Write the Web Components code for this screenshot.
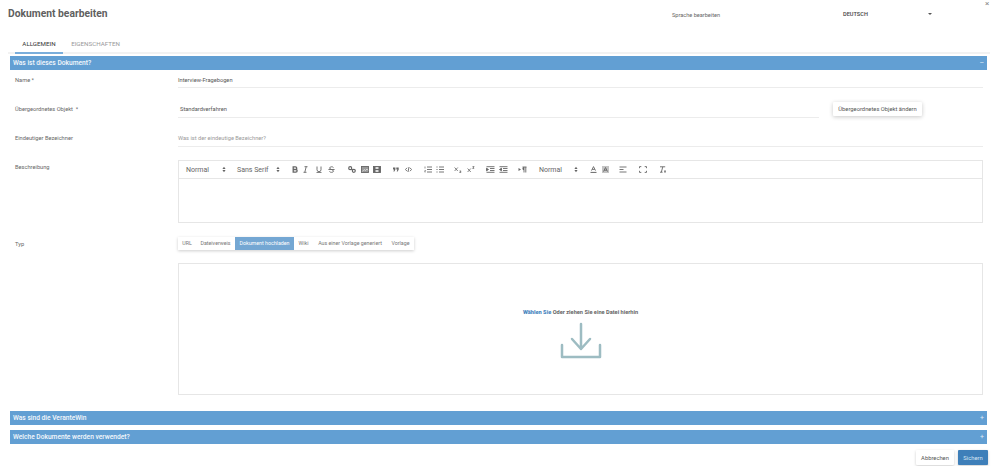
<!DOCTYPE html>
<html lang="de">
<head>
<meta charset="utf-8">
<title>Dokument bearbeiten</title>
<style>
html, body { margin: 0; padding: 0; background: #fff; }
body { width: 1000px; height: 466px; overflow: hidden; font-family: Roboto, "Liberation Sans", sans-serif; color: #555; }
</style>
</head>
<body>
<doc-editor>
  <doc-header title-text="Dokument bearbeiten" lang-label="Sprache bearbeiten" lang-value="DEUTSCH"></doc-header>
  <doc-tabs></doc-tabs>
  <section-bar open>Was ist dieses Dokument?</section-bar>
  <form-row label="Name *" height="30" pad="6"><text-line pad="6">Interview-Fragebogen</text-line></form-row>
  <form-row label="Übergeordnetes Objekt &nbsp;*" height="29" pad="5">
    <text-line short pad="5">Standardverfahren</text-line>
    <raised-button slot="aside">Übergeordnetes Objekt ändern</raised-button>
  </form-row>
  <form-row label="Eindeutiger Bezeichner" height="31" pad="5"><text-line muted pad="5">Was ist der eindeutige Bezeichner?</text-line></form-row>
  <form-row label="Beschreibung" height="77" pad="3"><rich-editor></rich-editor></form-row>
  <form-row label="Typ" height="26" pad="3"><type-tabs></type-tabs></form-row>
  <drop-zone></drop-zone>
  <section-bar class="second">Was sind die VeranteWin</section-bar>
  <section-bar class="third">Welche Dokumente werden verwendet?</section-bar>
  <form-actions></form-actions>
</doc-editor>

<script>
class DocEditor extends HTMLElement {
    connectedCallback() {
        this.attachShadow({ mode: 'open' });
        this.shadowRoot.innerHTML = `
            <style>
                :host { display: block; position: relative; height: 466px; }
                .close { position: absolute; top: 0; left: 985px; font-size: 8px; line-height: 8px; color: #888; }
                ::slotted(section-bar.second) { margin-top: 16px; }
                ::slotted(section-bar.third) { margin-top: 5px; }
            </style>
            <span class="close">×</span>
            <slot></slot>
        `;
    }
}

class DocHeader extends HTMLElement {
    connectedCallback() {
        this.attachShadow({ mode: 'open' });
        this.shadowRoot.innerHTML = `
            <style>
                :host { display: flex; height: 35px; box-sizing: border-box; padding: 6px 0 0 8px; align-items: flex-start; }
                h1 { margin: 0; width: 664px; font-size: 10.3px; line-height: 15px; font-weight: 700; color: #5f5f5f; }
                .lang { width: 171px; padding-top: 4px; font-size: 5.6px; line-height: 10px; color: #666; }
                .value { width: 85px; padding-top: 3px; font-size: 5.6px; line-height: 10px; color: #444; font-weight: 500; }
                .caret { margin-top: 7px; width: 0; height: 0; border: 2px solid transparent; border-top: 2px solid #555; border-bottom: 0; }
            </style>
            <h1>${this.getAttribute('title-text')}</h1>
            <span class="lang">${this.getAttribute('lang-label')}</span>
            <span class="value">${this.getAttribute('lang-value')}</span>
            <span class="caret"></span>
        `;
    }
}

class DocTabs extends HTMLElement {
    connectedCallback() {
        this.attachShadow({ mode: 'open' });
        this.shadowRoot.innerHTML = `
            <style>
                :host { display: flex; height: 19px; box-sizing: border-box; margin: 0 10px 0 8px; padding-left: 7px; border-bottom: 2px solid #f2f2f2; }
                span { font-size: 6.2px; line-height: 18px; height: 19px; box-sizing: border-box; text-align: center; color: #999; }
                .on { width: 48px; color: #333; border-bottom: 2px solid #7aaedb; }
                .off { margin-left: 8px; width: 49px; }
            </style>
            <span class="on">ALLGEMEIN</span>
            <span class="off">EIGENSCHAFTEN</span>
        `;
    }
}

class SectionBar extends HTMLElement {
    connectedCallback() {
        this.attachShadow({ mode: 'open' });
        const sign = this.hasAttribute('open') ? '–' : '+';
        this.shadowRoot.innerHTML = `
            <style>
                :host { display: flex; justify-content: space-between; align-items: center; box-sizing: border-box; height: 14px; margin: 2px 13px 0 10px; padding: 0 3px; background: #629fd3; color: #f4f8fc; font-size: 6.65px; font-weight: 500; }
                .sign { font-size: 7px; font-weight: 400; opacity: .85; }
            </style>
            <span><slot></slot></span>
            <span class="sign">${sign}</span>
        `;
    }
}

class FormRow extends HTMLElement {
    connectedCallback() {
        this.attachShadow({ mode: 'open' });
        this.shadowRoot.innerHTML = `
            <style>
                :host { display: grid; grid-template-columns: 163px 641px 103px; box-sizing: border-box; height: ${this.getAttribute('height')}px; margin-left: 15px; align-items: start; }
                .label { font-size: 5.7px; line-height: 8px; color: #666; padding-top: ${this.getAttribute('pad')}px; }
                .body { grid-column: 2 / 4; grid-row: 1; min-width: 0; width: 805px; }
                .aside { grid-column: 3; grid-row: 1; position: relative; z-index: 1; }
                .aside-box { margin-left: 14px; }
            </style>
            <span class="label">${this.getAttribute('label')}</span>
            <div class="body"><slot></slot></div>
            <div class="aside"><div class="aside-box"><slot name="aside"></slot></div></div>
        `;
    }
}

class TextLine extends HTMLElement {
    connectedCallback() {
        this.attachShadow({ mode: 'open' });
        const short = this.hasAttribute('short');
        this.shadowRoot.innerHTML = `
            <style>
                :host { display: block; box-sizing: border-box; height: 18px; width: ${short ? '641px' : '805px'}; padding: ${this.getAttribute('pad')}px 0 0 ${short ? 2 : 0}px; border-bottom: 1px solid #ececec; font-size: 5.7px; line-height: 8px; color: ${this.hasAttribute('muted') ? '#9a9a9a' : '#555'}; }
            </style>
            <slot></slot>
        `;
    }
}

class RaisedButton extends HTMLElement {
    connectedCallback() {
        this.attachShadow({ mode: 'open' });
        this.shadowRoot.innerHTML = `
            <style>
                :host { display: block; box-sizing: border-box; width: 89px; height: 14px; margin-top: 2px; text-align: center; font-size: 5.8px; line-height: 14px; color: #555; background: #fff; box-shadow: 0 1px 4px rgba(0,0,0,.22); border-radius: 1px; white-space: nowrap; }
            </style>
            <slot></slot>
        `;
    }
}

class RichEditor extends HTMLElement {
    connectedCallback() {
        this.attachShadow({ mode: 'open' });
        const ic = (w, body) => `<svg width="${w}" height="7" viewBox="0 0 ${w} 7" fill="none" stroke="#666" stroke-width=".9">${body}</svg>`;
        const gap = (w) => `<i style="width:${w}px"></i>`;
        const updown = `<svg width="4" height="7" viewBox="0 0 4 7" fill="#666"><path d="M2 .8 3.6 3H.4zM2 6.2.4 4h3.2z"/></svg>`;
        const lines = (x) => `<path d="M${x} 1h5M${x} 3.5h5M${x} 6h5"/>`;
        this.shadowRoot.innerHTML = `
            <style>
                :host { display: block; box-sizing: border-box; width: 805px; height: 63px; border: 1px solid #e6e6e6; }
                .bar { display: flex; align-items: center; box-sizing: border-box; height: 18px; padding-left: 7px; border-bottom: 1px solid #e6e6e6; color: #666; font-size: 7px; white-space: nowrap; }
                .bar i { display: block; flex: none; }
                .bar svg { flex: none; display: block; }
                .t { flex: none; }
            </style>
            <div class="bar">
                <span class="t" style="width:23px">Normal</span>${gap(13)}${updown}${gap(11)}
                <span class="t" style="width:33px">Sans Serif</span>${gap(6)}${updown}${gap(12)}
                ${ic(6, '<path stroke-width="1.3" d="M1.2 .8h2.2a1.3 1.3 0 0 1 0 2.7H1.2zM1.2 3.5h2.6a1.35 1.35 0 0 1 0 2.7H1.2z"/>')}${gap(5)}
                ${ic(5, '<path d="M1.5.7h3M.5 6.3h3M3.2.7 1.8 6.3"/>')}${gap(8)}
                ${ic(6, '<path d="M1 .5v3.2a2 2 0 0 0 4 0V.5M.5 6.6h5"/>')}${gap(6)}
                ${ic(7, '<path d="M5.5 1.6C5 .6 2 .2 1.6 2c-.3 1.5 4 1.4 3.9 3.2C5.4 6.8 2 6.6 1.4 5.4M.4 3.5h6.2"/>')}${gap(13)}
                ${ic(8, '<circle cx="2.2" cy="2.2" r="1.5" stroke-width="1.2"/><circle cx="5.8" cy="4.8" r="1.5" stroke-width="1.2"/><path stroke-width="1.2" d="M3 3l2 1"/>')}${gap(5)}
                ${ic(8, '<rect x=".5" y=".5" width="7" height="6" fill="#999"/><path stroke="#eee" stroke-width=".7" d="M1.2 5.6l2-2 1.3 1L6 3l1 1.4"/>')}${gap(4)}
                ${ic(8, '<rect x=".5" y=".5" width="7" height="6" fill="#666"/><rect x="2.5" y="1" width="3" height="2" fill="#ddd" stroke="none"/><rect x="2.5" y="4" width="3" height="2" fill="#ddd" stroke="none"/>')}${gap(12)}
                ${ic(6, '<path fill="#666" stroke="none" d="M0 1.5h2.4v2L1.4 5.5H.4l.7-2H0zM3.3 1.5h2.4v2l-1 2h-1l.7-2H3.3z"/>')}${gap(6)}
                ${ic(7, '<path d="M2 1.8.5 3.5 2 5.2M5 1.8l1.5 1.7L5 5.2M4 1 3 6"/>')}${gap(12)}
                ${ic(8, '<path stroke-width=".7" d="M1 .5v2M.6 4.5h1l-1 1.5h1"/><path d="M3 1h5M3 3.5h5M3 6h5"/>')}${gap(4)}
                ${ic(8, '<path stroke-dasharray="1 1.5" stroke-width="1" d="M1 .5v6"/>' + lines(3))}${gap(10)}
                ${ic(8, '<path d="M.6 1.5l3.2 3.5M3.8 1.5.6 5M5.5 5h1.6l-1.4 1.6h1.5" stroke-width=".8"/>')}${gap(5)}
                ${ic(8, '<path d="M.6 2.5l3.2 3.5M3.8 2.5.6 6M5.5 .6h1.6L5.7 2.4h1.5" stroke-width=".8"/>')}${gap(11)}
                ${ic(9, '<path d="M.5 .7h8M.5 6.3h8M4 2.5h4.5M4 4.5h4.5"/><path d="M.5 2.2 2.5 3.5.5 4.8z" fill="#666"/>')}${gap(4)}
                ${ic(9, '<path d="M.5 .7h8M.5 6.3h8M4 2.5h4.5M4 4.5h4.5"/><path d="M2.5 2.2.5 3.5l2 1.3z" fill="#666"/>')}${gap(10)}
                ${ic(9, '<path d="M4.5 1h4M6 1v5.5M7.8 1v5.5" /><path fill="#666" stroke="none" d="M6 1a1.6 1.6 0 0 0 0 3.2zM.5 2 3 3.5.5 5z"/>')}${gap(12)}
                <span class="t" style="width:24px">Normal</span>${gap(11)}${updown}${gap(12)}
                ${ic(7, '<path d="M1.5 4.6 3.5.6l2 4M2.2 3.4h2.6"/><path stroke-width="1" d="M.5 6.4h6"/>')}${gap(5)}
                ${ic(7, '<rect width="7" height="7" fill="#c4c4c4" stroke="none"/><path d="M1.5 5.6 3.5 1.5l2 4.1M2.2 4.2h2.6"/>')}${gap(10)}
                ${ic(8, '<path d="M.5 1h7M.5 3.5h4M.5 6h7"/>')}${gap(12)}
                ${ic(8, '<path d="M.5 2.2V.6h1.8M5.7.6h1.8v1.6M.5 4.8v1.6h1.8M5.7 6.4h1.8V4.8"/>')}${gap(12)}
                ${ic(8, '<path d="M1 .8h5.2M3.8.8 2.3 6.2M1 6.2h2.6M5 4.6l2 1.8M7 4.6 5 6.4"/>')}
            </div>
        `;
    }
}

class TypeTabs extends HTMLElement {
    connectedCallback() {
        this.attachShadow({ mode: 'open' });
        const tabs = [['URL', 18], ['Dateiverweis', 39], ['Dokument hochladen', 59], ['Wiki', 19], ['Aus einer Vorlage generiert', 74], ['Vorlage', 27]];
        this.shadowRoot.innerHTML = `
            <style>
                :host { display: flex; width: fit-content; height: 13px; background: #fff; box-shadow: 0 1px 3px rgba(0,0,0,.2); }
                span { display: block; font-size: 5.3px; line-height: 13px; text-align: center; color: #777; white-space: nowrap; }
                .on { background: #74a7d3; color: #fff; }
            </style>
            ${tabs.map(([t, w]) => `<span class="${t === 'Dokument hochladen' ? 'on' : ''}" style="width:${w}px">${t}</span>`).join('')}
        `;
    }
}

class DropZone extends HTMLElement {
    connectedCallback() {
        this.attachShadow({ mode: 'open' });
        this.shadowRoot.innerHTML = `
            <style>
                :host { display: flex; flex-direction: column; align-items: center; box-sizing: border-box; width: 805px; height: 132px; margin-left: 178px; padding-top: 44px; border: 1px solid #e6e6e6; }
                p { margin: 0; font-size: 5.65px; line-height: 8px; font-weight: 700; color: #666; }
                b { color: #4a86c0; }
                svg { display: block; margin-top: 6px; }
            </style>
            <p><b>Wählen Sie</b> Oder ziehen Sie eine Datei hierhin</p>
            <svg width="42" height="37" viewBox="0 0 42 37" fill="none" stroke="#9dbcc2" stroke-width="2.5" stroke-linecap="round" stroke-linejoin="round">
                <path d="M21 2v25M12 17l9 10 9-10M2 23v12h38V23"/>
            </svg>
        `;
    }
}

class FormActions extends HTMLElement {
    connectedCallback() {
        this.attachShadow({ mode: 'open' });
        this.shadowRoot.innerHTML = `
            <style>
                :host { display: flex; justify-content: flex-end; gap: 4px; margin: 6px 12px 0 0; height: 15px; }
                button { font: inherit; font-size: 5.8px; border: 0; padding: 0; height: 15px; border-radius: 1px; }
                .cancel { width: 38px; background: #fff; color: #555; box-shadow: 0 1px 3px rgba(0,0,0,.2); }
                .save { width: 30px; background: #3e7fb9; color: #d8e8f4; box-shadow: 0 1px 3px rgba(0,0,0,.2); }
            </style>
            <button class="cancel">Abbrechen</button>
            <button class="save">Sichern</button>
        `;
    }
}

customElements.define('doc-editor', DocEditor);
customElements.define('doc-header', DocHeader);
customElements.define('doc-tabs', DocTabs);
customElements.define('section-bar', SectionBar);
customElements.define('form-row', FormRow);
customElements.define('text-line', TextLine);
customElements.define('raised-button', RaisedButton);
customElements.define('rich-editor', RichEditor);
customElements.define('type-tabs', TypeTabs);
customElements.define('drop-zone', DropZone);
customElements.define('form-actions', FormActions);
</script>
</body>
</html>
